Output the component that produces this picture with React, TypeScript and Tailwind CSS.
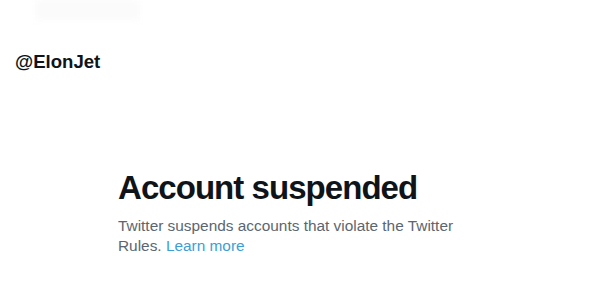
export default function App() {
  return (
    <main
      className="w-[600px] h-[300px] bg-white overflow-hidden flex flex-col"
      style={{ fontFamily: '"Liberation Sans", Arial, sans-serif' }}
    >
      <div className="h-[20px] ml-[35px] w-[105px] bg-[#fbfbfb] blur-[3px]" />
      <div className="pl-[15px] pt-[31px] text-[18.6px] leading-[22px] font-bold text-[#0f1419]">@ElonJet</div>
      <section className="pl-[118px] pt-[96px] w-[480px] flex flex-col">
        <h1 className="text-[33px] leading-[38px] font-bold tracking-[-0.95px] text-[#0f1419]">Account suspended</h1>
        <p className="mt-[9px] text-[15.4px] leading-[20px] text-[#5b6670] w-[350px]">
          Twitter suspends accounts that violate the Twitter Rules.{" "}
          <a className="text-[#3b9fd6]">Learn more</a>
        </p>
      </section>
    </main>
  );
}
